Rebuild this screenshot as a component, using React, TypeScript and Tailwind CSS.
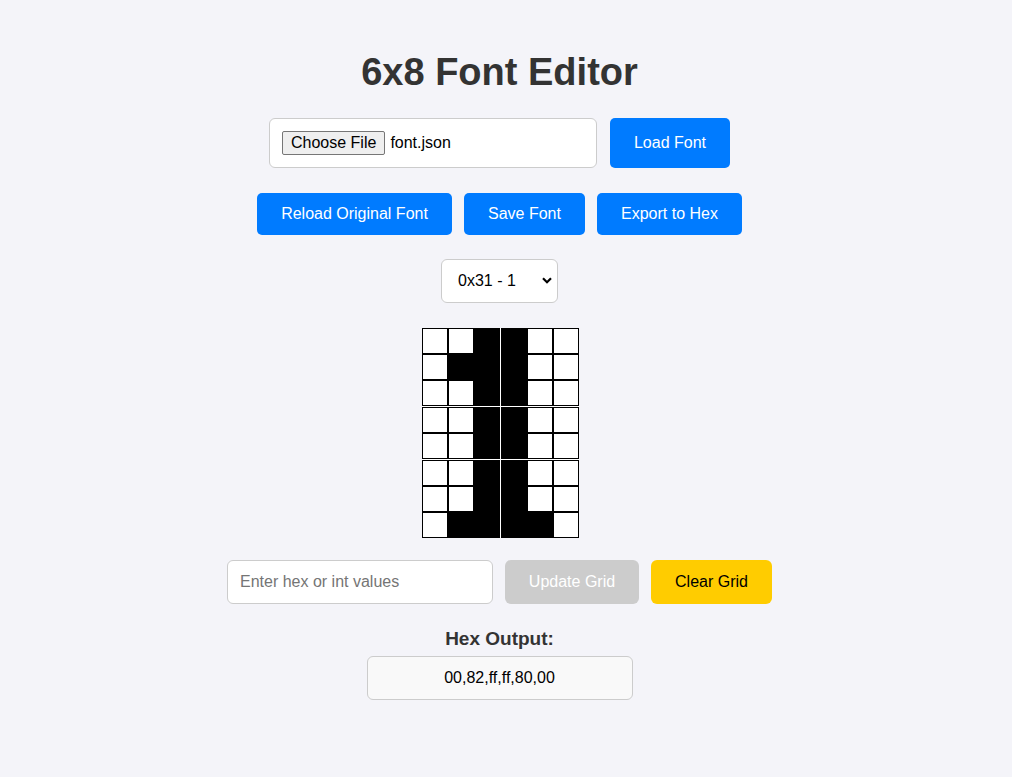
import { useState } from 'react';

// column bytes, bit 0 = top row
const INITIAL = [0x00, 0x82, 0xff, 0xff, 0x80, 0x00];

const toHex = (cols: number[]) => cols.map((c) => c.toString(16).padStart(2, '0')).join(',');

export default function App() {
  const [cols, setCols] = useState<number[]>(INITIAL);
  const [input, setInput] = useState('');

  const toggle = (c: number, r: number) => {
    setCols((prev) => prev.map((v, i) => (i === c ? v ^ (1 << r) : v)));
  };

  return (
    <div className="min-h-[777px] w-full bg-[#f4f4f9] font-['Liberation_Sans',Arial,sans-serif] text-[#333]">
      <div className="flex flex-col items-center pr-[13px]">
        <h1 className="mt-[50px] h-[44px] text-[38px] font-bold leading-[44px] text-[#333]">6x8 Font Editor</h1>

        {/* File picker + load */}
        <div className="mt-[24px] flex h-[50px] items-stretch gap-[13px]">
          <div className="flex w-[328px] items-center rounded-[6px] border border-[#ccc] bg-white pl-[12px]">
            <span className="rounded-[2px] border border-[#767676] bg-[#efefef] px-[8px] py-[2px] text-[16px] leading-[18px] text-black">
              Choose File
            </span>
            <span className="ml-[5px] -mt-[1px] text-[16px] leading-[18px] text-black">font.json</span>
          </div>
          <button className="w-[120px] rounded-[5px] bg-[#007bff] text-[16px] text-white">Load Font</button>
        </div>

        <div className="mt-[25px] flex gap-[12px]">
          <button className="w-[195px] rounded-[5px] bg-[#007bff] py-3 text-[16px] leading-[18px] text-white">Reload Original Font</button>
          <button className="w-[121px] rounded-[5px] bg-[#007bff] py-3 text-[16px] leading-[18px] text-white">Save Font</button>
          <button className="w-[145px] rounded-[5px] bg-[#007bff] py-3 text-[16px] leading-[18px] text-white">Export to Hex</button>
        </div>

        {/* Character select */}
        <div className="relative mt-[24px] h-[44px] w-[117px]">
          <select className="h-full w-full appearance-none rounded-[6px] border border-[#ccc] bg-white pl-[16px] text-[16px] text-black outline-none">
            <option>0x31 - 1</option>
          </select>
          <svg className="pointer-events-none absolute right-[6px] top-[18px]" width="10" height="7" viewBox="0 0 10 7">
            <path d="M1 1.2 L5 5.2 L9 1.2" fill="none" stroke="#000" strokeWidth="2.2" />
          </svg>
        </div>

        {/* Pixel grid */}
        <div className="ml-[2px] mt-[25px] flex flex-col bg-white">
          {Array.from({ length: 8 }).map((_, r) => (
            <div key={r} className={`flex ${r === 2 || r === 4 ? 'mb-px' : ''}`}>
              {cols.map((v, c) => (
                <div
                  key={c}
                  onClick={() => toggle(c, r)}
                  className={`h-[26px] w-[26px] cursor-pointer border border-black ${(v >> r) & 1 ? 'bg-black' : 'bg-white'} ${c === 2 ? 'mr-px' : ''}`}
                />
              ))}
            </div>
          ))}
        </div>

        <div className="mt-[22px] flex h-[44px] gap-[12px]">
          <input
            value={input}
            onChange={(e) => setInput(e.target.value)}
            placeholder="Enter hex or int values"
            className="w-[266px] rounded-[6px] border border-[#ccc] bg-white px-[12px] text-[16px] text-black outline-none placeholder:text-[#757575]"
          />
          <button className="w-[134px] rounded-[6px] bg-[#cccccc] text-[16px] text-white">Update Grid</button>
          <button onClick={() => setCols([0, 0, 0, 0, 0, 0])} className="w-[121px] rounded-[6px] bg-[#ffcc00] text-[16px] text-black">
            Clear Grid
          </button>
        </div>

        <h3 className="mt-[24px] h-[22px] text-[19px] font-bold leading-[22px] text-[#333]">Hex Output:</h3>
        <div className="mt-[6px] flex h-[44px] w-[266px] items-center justify-center rounded-[6px] border border-[#ccc] bg-[#f9f9f9] text-[16px] text-black">
          {toHex(cols)}
        </div>
      </div>
    </div>
  );
}
